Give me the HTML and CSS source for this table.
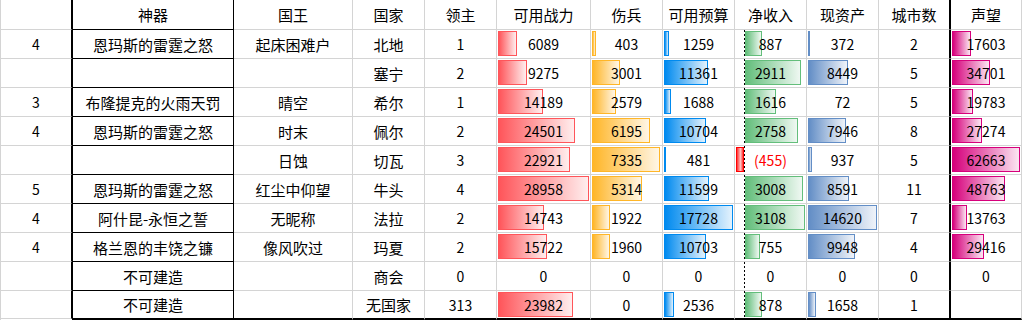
FILE: index.html
```html
<!DOCTYPE html>
<html lang="zh-CN">
<head>
<meta charset="utf-8">
<title>国家统计</title>
<link rel="stylesheet" href="styles.css">
</head>
<body>
<div class="sheet">
  <!-- header -->
  <div class="c k0"></div>
  <div class="c k1 t">神器</div>
  <div class="c t">国王</div>
  <div class="c t">国家</div>
  <div class="c t">领主</div>
  <div class="c t">可用战力</div>
  <div class="c t">伤兵</div>
  <div class="c t">可用预算</div>
  <div class="c t">净收入</div>
  <div class="c t">现资产</div>
  <div class="c k10 t">城市数</div>
  <div class="c k11 t">声望</div>

  <!-- row 1 -->
  <div class="c k0 n">4</div>
  <div class="c k1 t">恩玛斯的雷霆之怒</div>
  <div class="c t">起床困难户</div>
  <div class="c t">北地</div>
  <div class="c n">1</div>
  <div class="c n"><i class="bar red" style="width:19px"></i><span>6089</span></div>
  <div class="c n"><i class="bar org" style="width:4px"></i><span>403</span></div>
  <div class="c n"><i class="bar sky" style="width:5px"></i><span>1259</span></div>
  <div class="c n net"><i class="axis"></i><i class="bar grn" style="width:17px"></i><span>887</span></div>
  <div class="c n"><i class="bar blu" style="width:2px"></i><span>372</span></div>
  <div class="c k10 n">2</div>
  <div class="c k11 n"><i class="bar pur" style="width:19px"></i><span>17603</span></div>

  <!-- row 2 -->
  <div class="c k0 n"></div>
  <div class="c k1 t"></div>
  <div class="c t"></div>
  <div class="c t">塞宁</div>
  <div class="c n">2</div>
  <div class="c n"><i class="bar red" style="width:29px"></i><span>9275</span></div>
  <div class="c n"><i class="bar org" style="width:28px"></i><span>3001</span></div>
  <div class="c n"><i class="bar sky" style="width:44px"></i><span>11361</span></div>
  <div class="c n net"><i class="axis"></i><i class="bar grn" style="width:56px"></i><span>2911</span></div>
  <div class="c n"><i class="bar blu" style="width:40px"></i><span>8449</span></div>
  <div class="c k10 n">5</div>
  <div class="c k11 n"><i class="bar pur" style="width:38px"></i><span>34701</span></div>

  <!-- row 3 -->
  <div class="c k0 n">3</div>
  <div class="c k1 t">布隆提克的火雨天罚</div>
  <div class="c t">晴空</div>
  <div class="c t">希尔</div>
  <div class="c n">1</div>
  <div class="c n"><i class="bar red" style="width:45px"></i><span>14189</span></div>
  <div class="c n"><i class="bar org" style="width:24px"></i><span>2579</span></div>
  <div class="c n"><i class="bar sky" style="width:7px"></i><span>1688</span></div>
  <div class="c n net"><i class="axis"></i><i class="bar grn" style="width:31px"></i><span>1616</span></div>
  <div class="c n"><span>72</span></div>
  <div class="c k10 n">5</div>
  <div class="c k11 n"><i class="bar pur" style="width:21px"></i><span>19783</span></div>

  <!-- row 4 -->
  <div class="c k0 n">4</div>
  <div class="c k1 t">恩玛斯的雷霆之怒</div>
  <div class="c t">时末</div>
  <div class="c t">佩尔</div>
  <div class="c n">2</div>
  <div class="c n"><i class="bar red" style="width:77px"></i><span>24501</span></div>
  <div class="c n"><i class="bar org" style="width:58px"></i><span>6195</span></div>
  <div class="c n"><i class="bar sky" style="width:42px"></i><span>10704</span></div>
  <div class="c n net"><i class="axis"></i><i class="bar grn" style="width:53px"></i><span>2758</span></div>
  <div class="c n"><i class="bar blu" style="width:38px"></i><span>7946</span></div>
  <div class="c k10 n">8</div>
  <div class="c k11 n"><i class="bar pur" style="width:30px"></i><span>27274</span></div>

  <!-- row 5 -->
  <div class="c k0 n"></div>
  <div class="c k1 t"></div>
  <div class="c t">日蚀</div>
  <div class="c t">切瓦</div>
  <div class="c n">3</div>
  <div class="c n"><i class="bar red" style="width:72px"></i><span>22921</span></div>
  <div class="c n"><i class="bar org" style="width:68px"></i><span>7335</span></div>
  <div class="c n"><i class="bar sky" style="width:2px"></i><span>481</span></div>
  <div class="c n net"><i class="neg" style="width:8px"></i><i class="axis"></i><span class="minus">(455)</span></div>
  <div class="c n"><i class="bar blu" style="width:4px"></i><span>937</span></div>
  <div class="c k10 n">5</div>
  <div class="c k11 n"><i class="bar pur" style="width:68px"></i><span>62663</span></div>

  <!-- row 6 -->
  <div class="c k0 n">5</div>
  <div class="c k1 t">恩玛斯的雷霆之怒</div>
  <div class="c t">红尘中仰望</div>
  <div class="c t">牛头</div>
  <div class="c n">4</div>
  <div class="c n"><i class="bar red" style="width:91px"></i><span>28958</span></div>
  <div class="c n"><i class="bar org" style="width:50px"></i><span>5314</span></div>
  <div class="c n"><i class="bar sky" style="width:45px"></i><span>11599</span></div>
  <div class="c n net"><i class="axis"></i><i class="bar grn" style="width:58px"></i><span>3008</span></div>
  <div class="c n"><i class="bar blu" style="width:41px"></i><span>8591</span></div>
  <div class="c k10 n">11</div>
  <div class="c k11 n"><i class="bar pur" style="width:53px"></i><span>48763</span></div>

  <!-- row 7 -->
  <div class="c k0 n">4</div>
  <div class="c k1 t">阿什昆-永恒之誓</div>
  <div class="c t">无昵称</div>
  <div class="c t">法拉</div>
  <div class="c n">2</div>
  <div class="c n"><i class="bar red" style="width:46px"></i><span>14743</span></div>
  <div class="c n"><i class="bar org" style="width:18px"></i><span>1922</span></div>
  <div class="c n"><i class="bar sky" style="width:69px"></i><span>17728</span></div>
  <div class="c n net"><i class="axis"></i><i class="bar grn" style="width:60px"></i><span>3108</span></div>
  <div class="c n"><i class="bar blu" style="width:69px"></i><span>14620</span></div>
  <div class="c k10 n">7</div>
  <div class="c k11 n"><i class="bar pur" style="width:15px"></i><span>13763</span></div>

  <!-- row 8 -->
  <div class="c k0 n">4</div>
  <div class="c k1 t">格兰恩的丰饶之镰</div>
  <div class="c t">像风吹过</div>
  <div class="c t">玛夏</div>
  <div class="c n">2</div>
  <div class="c n"><i class="bar red" style="width:49px"></i><span>15722</span></div>
  <div class="c n"><i class="bar org" style="width:18px"></i><span>1960</span></div>
  <div class="c n"><i class="bar sky" style="width:42px"></i><span>10703</span></div>
  <div class="c n net"><i class="axis"></i><i class="bar grn" style="width:15px"></i><span>755</span></div>
  <div class="c n"><i class="bar blu" style="width:47px"></i><span>9948</span></div>
  <div class="c k10 n">4</div>
  <div class="c k11 n"><i class="bar pur" style="width:32px"></i><span>29416</span></div>

  <!-- row 9 -->
  <div class="c k0 n"></div>
  <div class="c k1 t">不可建造</div>
  <div class="c t"></div>
  <div class="c t">商会</div>
  <div class="c n">0</div>
  <div class="c n"><span>0</span></div>
  <div class="c n"><span>0</span></div>
  <div class="c n"><span>0</span></div>
  <div class="c n net"><i class="axis"></i><span>0</span></div>
  <div class="c n"><span>0</span></div>
  <div class="c k10 n">0</div>
  <div class="c k11 n"><span>0</span></div>

  <!-- row 10 -->
  <div class="c k0 n last0"></div>
  <div class="c k1 t last">不可建造</div>
  <div class="c t last"></div>
  <div class="c t last">无国家</div>
  <div class="c n last">313</div>
  <div class="c n last"><i class="bar red" style="width:75px"></i><span>23982</span></div>
  <div class="c n last"><span>0</span></div>
  <div class="c n last"><i class="bar sky" style="width:10px"></i><span>2536</span></div>
  <div class="c n net last"><i class="axis"></i><i class="bar grn" style="width:17px"></i><span>878</span></div>
  <div class="c n last"><i class="bar blu" style="width:8px"></i><span>1658</span></div>
  <div class="c k10 n last">1</div>
  <div class="c k11 n last"></div>
</div>
</body>
</html>
```
FILE: styles.css
```css
html, body {
  margin: 0;
  padding: 0;
  background: #ffffff;
}

body {
  font-family: "Noto Sans CJK SC", "Noto Sans", sans-serif;
  color: #000;
  overflow: hidden;
}

.sheet {
  display: grid;
  grid-template-columns: 71px 162px 119px 72px 72px 94px 72px 72px 72px 72px 71px 72px;
  grid-template-rows: 30px repeat(10, 29px);
  border-left: 1px solid #d4d4d4;
  width: 1022px;
}

.c {
  box-sizing: border-box;
  display: grid;
  grid-template-columns: 1fr;
  grid-template-rows: 1fr;
  align-items: center;
  justify-items: center;
  border-right: 1px solid #d4d4d4;
  border-bottom: 1px solid #d4d4d4;
  min-width: 0;
  white-space: nowrap;
}

.c > * {
  grid-area: 1 / 1;
}

.t {
  font-size: 15px;
  line-height: 1;
}

.n {
  font-size: 14px;
  line-height: 1;
}

.k0 {
  border-right-color: #000;
}

.k1 {
  border-left: 1px solid #000;
  border-right-color: #000;
  border-bottom-color: #000;
}

.k10 {
  border-right-color: #000;
}

.k11 {
  border-left: 1px solid #000;
}

.last {
  border-bottom: 2px solid #000;
}

.last0 {
  border-bottom: 1px solid #d4d4d4;
  margin-bottom: 1px;
}

.bar {
  box-sizing: border-box;
  justify-self: start;
  align-self: start;
  height: 25px;
  margin-top: 1px;
  margin-left: 1px;
  border: 1px solid;
}

.c span {
  position: relative;
}

.red { border-color: #ff555a; background: linear-gradient(to right, #ff555a, #ffeeee); }
.org { border-color: #ffb628; background: linear-gradient(to right, #ffb628, #fff6e6); }
.sky { border-color: #008aef; background: linear-gradient(to right, #008aef, #e3f2fd); }
.grn { border-color: #63be7b; background: linear-gradient(to right, #63be7b, #eff8f2); }
.blu { border-color: #638ec6; background: linear-gradient(to right, #638ec6, #eff3f9); }
.pur { border-color: #d6007b; background: linear-gradient(to right, #d6007b, #fbe6f2); }

.net {
  grid-template-columns: 9px 1px 1fr;
}

.net > span {
  grid-area: 1 / 1 / 2 / 4;
  justify-self: center;
}

.net .axis {
  grid-area: 1 / 2;
  align-self: stretch;
  width: 1px;
  background: repeating-linear-gradient(to bottom, #000 0 2px, transparent 2px 4px);
}

.net .bar {
  grid-area: 1 / 3;
  margin-left: 0;
}

.net .neg {
  grid-area: 1 / 1;
  justify-self: end;
  align-self: start;
  box-sizing: border-box;
  height: 25px;
  margin-top: 1px;
  border: 1px solid #ff0000;
  background: linear-gradient(to right, #ff3030, #ffc4c4 60%, #ff3030);
}

.minus {
  color: #ff0000;
}
```
